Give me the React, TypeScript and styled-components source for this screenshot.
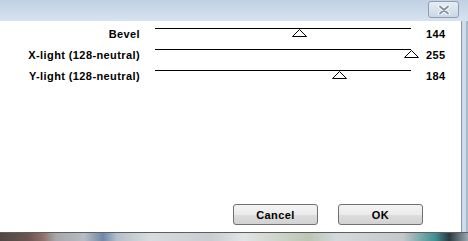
import React from "react";
import styled, { createGlobalStyle } from "styled-components";

const Global = createGlobalStyle`
  html, body { margin: 0; padding: 0; background: #ffffff; }
  body { font-family: "Liberation Sans", Arial, sans-serif; }
`;

const Window = styled.div`
  width: 468px;
  height: 241px;
  display: flex;
  flex-direction: column;
  overflow: hidden;
`;

const TitleBar = styled.div`
  height: 21px;
  flex: none;
  display: flex;
  justify-content: flex-end;
  align-items: flex-start;
  padding: 1px 9px 0 0;
  box-sizing: border-box;
  background: linear-gradient(#c0d1e3, #d6e2ef);
`;

const CloseButton = styled.div`
  width: 31px;
  height: 17px;
  box-sizing: border-box;
  border: 1px solid #8e9db0;
  border-radius: 3px;
  background: linear-gradient(#e6edf5, #cbd8e6);
  display: flex;
  align-items: center;
  justify-content: center;
`;

const Middle = styled.div`
  flex: 1;
  display: flex;
  min-height: 0;
`;

const Client = styled.div`
  flex: 1;
  background: #ffffff;
  display: flex;
  flex-direction: column;
`;

const RightFrame = styled.div`
  width: 7px;
  flex: none;
  box-sizing: border-box;
  border-left: 1px solid #8a98a8;
  background: #cddbea;
  box-shadow: inset -2px 0 0 #a9b8c8;
`;

const Sliders = styled.div`
  display: flex;
  flex-direction: column;
`;

const Row = styled.div`
  display: grid;
  grid-template-columns: 140px 256px auto;
  column-gap: 15px;
  height: 21px;
`;

const Label = styled.div`
  text-align: right;
  font-size: 11px;
  font-weight: bold;
  letter-spacing: 0.4px;
  line-height: 13px;
  padding-top: 7px;
  color: #000;
  white-space: nowrap;
`;

const Track = styled.div`
  position: relative;
  height: 21px;
  &::before {
    content: "";
    position: absolute;
    left: 0;
    right: 0;
    top: 7px;
    height: 1px;
    background: #000;
  }
`;

const Thumb = styled.svg`
  position: absolute;
  top: 8px;
  width: 15px;
  height: 8px;
  overflow: visible;
`;

const Value = styled.div`
  font-size: 11px;
  font-weight: bold;
  letter-spacing: 0.4px;
  line-height: 13px;
  padding-top: 7px;
  color: #000;
`;

const Footer = styled.div`
  margin-top: auto;
  display: flex;
  justify-content: flex-end;
  gap: 20px;
  padding: 0 38px 7px 0;
`;

const Button = styled.button`
  width: 85px;
  height: 21px;
  box-sizing: border-box;
  border: 1px solid #707070;
  border-radius: 3px;
  background: linear-gradient(#f4f4f4 0%, #ebebeb 50%, #dddddd 51%, #d2d2d2 100%);
  font-family: "Liberation Sans", Arial, sans-serif;
  font-size: 11px;
  font-weight: bold;
  letter-spacing: 0.4px;
  color: #000;
  padding: 0;
`;

const Desktop = styled.div`
  height: 9px;
  flex: none;
  box-sizing: border-box;
  border-top: 1px solid #5e5e5e;
  background: linear-gradient(
    90deg,
    #4f4644 0%,
    #6a5550 6%,
    #8c6e66 9%,
    #a9a7ac 12%,
    #b8bcc4 18%,
    #6f88a6 22%,
    #b4bfca 25%,
    #d9dcdf 32%,
    #c9ccd0 45%,
    #e2e4e6 52%,
    #b9c7b3 66%,
    #d5d9dc 72%,
    #c4c8cc 86%,
    #3f8f92 93%,
    #2b3a40 96%,
    #9aa6b0 100%
  );
`;

type SliderDef = { label: string; value: number };

const sliders: SliderDef[] = [
  { label: "Bevel", value: 144 },
  { label: "X-light (128-neutral)", value: 255 },
  { label: "Y-light (128-neutral)", value: 184 },
];

function SliderRow({ label, value }: SliderDef) {
  const center = (value / 255) * 256;
  return (
    <Row>
      <Label>{label}</Label>
      <Track>
        <Thumb style={{ left: center - 7.5 }} viewBox="0 0 15 8">
          <polygon
            points="7.5,0.5 14.5,7.5 0.5,7.5"
            fill="#ffffff"
            stroke="#000000"
            strokeWidth="1"
          />
        </Thumb>
      </Track>
      <Value>{value}</Value>
    </Row>
  );
}

export default function App() {
  return (
    <>
      <Global />
      <Window>
        <TitleBar>
          <CloseButton>
            <svg width="12" height="10" viewBox="0 0 12 10">
              <path
                d="M2 1.5 L10 8.5 M10 1.5 L2 8.5"
                stroke="#ffffff"
                strokeWidth="4"
                strokeLinecap="round"
              />
              <path
                d="M2 1.5 L10 8.5 M10 1.5 L2 8.5"
                stroke="#8593a4"
                strokeWidth="2"
                strokeLinecap="round"
              />
            </svg>
          </CloseButton>
        </TitleBar>
        <Middle>
          <Client>
            <Sliders>
              {sliders.map((s) => (
                <SliderRow key={s.label} {...s} />
              ))}
            </Sliders>
            <Footer>
              <Button>Cancel</Button>
              <Button>OK</Button>
            </Footer>
          </Client>
          <RightFrame />
        </Middle>
        <Desktop />
      </Window>
    </>
  );
}
